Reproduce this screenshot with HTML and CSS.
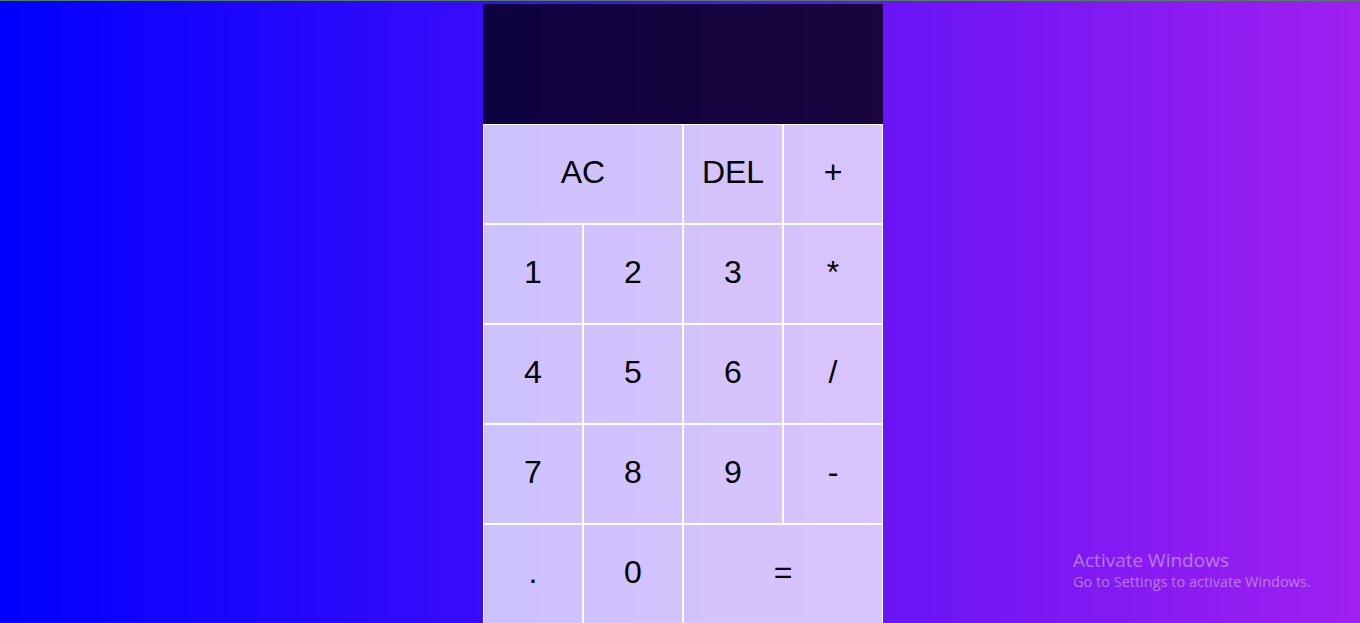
FILE: index.html
```html
<!DOCTYPE html>
<html>
<head>
<meta charset="utf-8">
<link rel="stylesheet" href="styles.css">
</head>
<body>
<div class="calculator-grid">
  <div class="output">
    <div class="previous-operand"></div>
    <div class="current-operand"></div>
  </div>
  <button class="span-two">AC</button>
  <button>DEL</button>
  <button>+</button>
  <button>1</button>
  <button>2</button>
  <button>3</button>
  <button>*</button>
  <button>4</button>
  <button>5</button>
  <button>6</button>
  <button>/</button>
  <button>7</button>
  <button>8</button>
  <button>9</button>
  <button>-</button>
  <button>.</button>
  <button>0</button>
  <button class="span-two">=</button>
</div>
<div class="activate">
  <div class="activate-title">Activate Windows</div>
  <div class="activate-sub">Go to Settings to activate Windows.</div>
</div>
</body>
</html>
```
FILE: styles.css
```css
*, *::before, *::after {
  box-sizing: border-box;
  font-family: "Liberation Sans", Arial, sans-serif;
}

html {
  border-top: 1px solid #4f7f5f;
  background: linear-gradient(to right, #0000ff, #a020f0);
  min-height: 100%;
}

body {
  margin: 0;
  padding: 3px 0 0 6px;
  min-height: 622px;
  overflow: hidden;
}

.calculator-grid {
  display: grid;
  justify-content: center;
  grid-template-columns: repeat(4, 100px);
  grid-template-rows: 120px repeat(5, 100px);
}

.calculator-grid > button {
  cursor: pointer;
  font-size: 2rem;
  border: 1px solid white;
  outline: none;
  background-color: rgba(255, 255, 255, 0.75);
  color: #000;
  padding: 0 0 4px 0;
  margin: 0;
}

.span-two {
  grid-column: span 2;
}

.output {
  grid-column: 1 / -1;
  background-color: rgba(0, 0, 0, 0.75);
  display: flex;
  flex-direction: column;
  align-items: flex-end;
  justify-content: space-around;
  padding: 10px;
  word-wrap: break-word;
  word-break: break-all;
}

.activate {
  position: absolute;
  left: 1073px;
  top: 548px;
  color: rgba(255, 255, 255, 0.42);
  font-family: "Open Sans", "Noto Sans", sans-serif;
}

.activate-title {
  font-family: "Open Sans", "Noto Sans", sans-serif;
  font-size: 19px;
  line-height: 24px;
}

.activate-sub {
  font-family: "Open Sans", "Noto Sans", sans-serif;
  font-size: 14.5px;
  line-height: 20px;
}
```
